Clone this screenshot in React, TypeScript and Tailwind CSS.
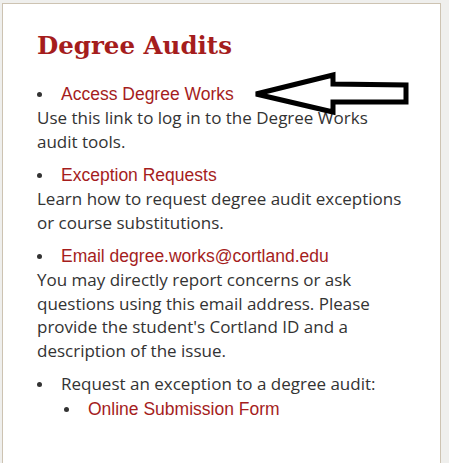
import React from "react";

const red = "text-[#a51d1d]";

function Bullet({ children, link = true }: { children: React.ReactNode; link?: boolean }) {
  return (
    <div className="flex items-center">
      <span className="w-[24px] shrink-0 flex items-center">
        <span className="block w-[5px] h-[5px] rounded-full bg-[#333]" />
      </span>
      {link ? (
        <a className={`${red} font-['Liberation_Sans',Arial,sans-serif] text-[17.5px] leading-[24px]`}>{children}</a>
      ) : (
        <span className="text-[#333] text-[17px] leading-[24px]">{children}</span>
      )}
    </div>
  );
}

export default function App() {
  return (
    <div className="w-[449px] h-[473px] bg-white overflow-hidden">
      <div className="bg-[#efefed] h-[463px] pt-[3px] pl-[2px] pr-[8px]">
        <div className="relative h-[460px] bg-white border border-b-0 border-[#cdc3b2] pl-[34px] pt-[26px] font-['Open_Sans',sans-serif] text-[#333]">
          <h2 className={`${red} font-['DejaVu_Serif',Georgia,serif] font-bold text-[24.5px] leading-[32px]`}>Degree Audits</h2>

          <div className="mt-[20px] flex flex-col gap-[10px] text-[17px] leading-[23.5px]">
            <div>
              <Bullet>Access Degree Works</Bullet>
              <p>Use this link to log in to the Degree Works<br />audit tools.</p>
            </div>
            <div>
              <Bullet>Exception Requests</Bullet>
              <p>Learn how to request degree audit exceptions<br />or course substitutions.</p>
            </div>
            <div>
              <Bullet>Email degree.works@cortland.edu</Bullet>
              <p>
                You may directly report concerns or ask<br />questions using this email address. Please<br />provide the student's Cortland ID and a<br />description of the issue.
              </p>
            </div>
            <div>
              <Bullet link={false}>Request an exception to a degree audit:</Bullet>
              <div className="pl-[27px] mt-[1px]">
                <Bullet>Online Submission Form</Bullet>
              </div>
            </div>
          </div>

          <svg className="absolute left-[248px] top-[67px]" width="164" height="46" viewBox="0 0 164 46">
            <polygon
              points="5,23 82,4 82,13 155,14 155,31 82,31 82,41"
              fill="white"
              stroke="black"
              strokeWidth="5"
              strokeLinejoin="miter"
            />
          </svg>
        </div>
      </div>
    </div>
  );
}
